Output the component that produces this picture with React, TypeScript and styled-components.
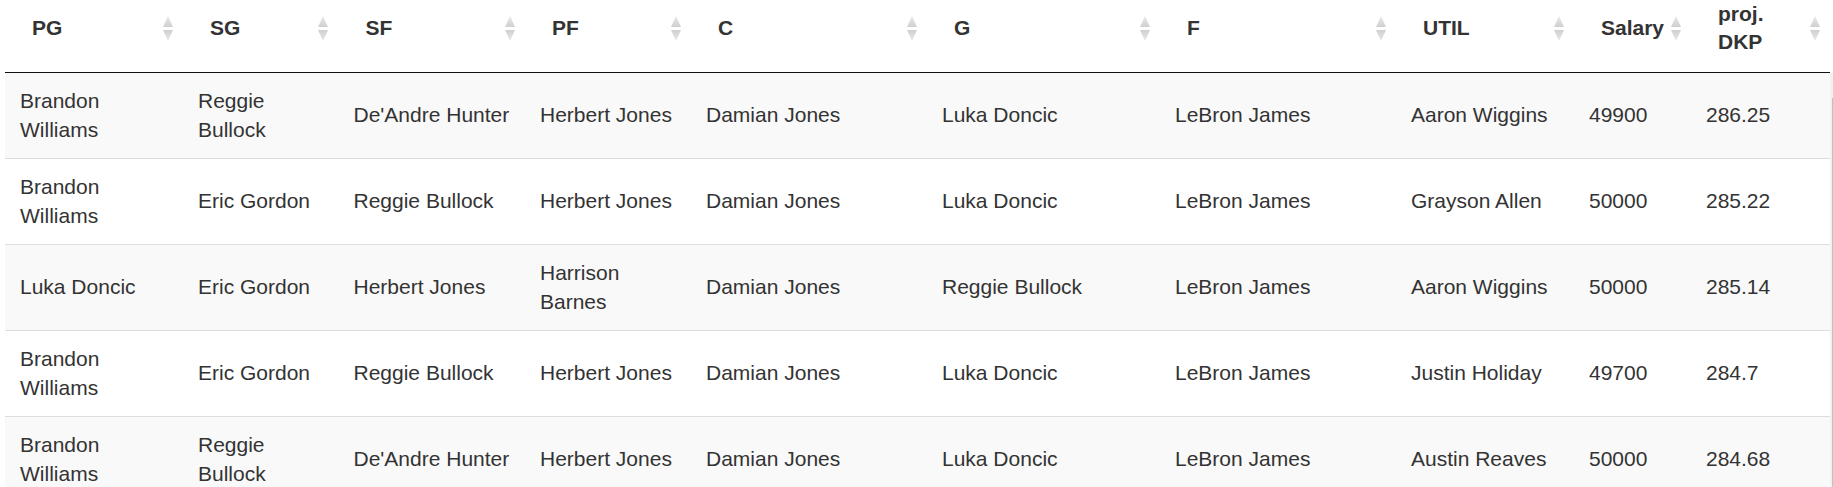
import React from 'react';
import styled, {createGlobalStyle} from "styled-components";

const GlobalStyle = createGlobalStyle`
  body {
    margin: 0;
    background: #fff;
    font-family: "Liberation Sans", Arial, sans-serif;
    overflow: hidden;
  }
`

type Column = { key: string; label: string; width: number }

const columns: Column[] = [
    {key: 'pg', label: 'PG', width: 178},
    {key: 'sg', label: 'SG', width: 155.5},
    {key: 'sf', label: 'SF', width: 186.5},
    {key: 'pf', label: 'PF', width: 166},
    {key: 'c', label: 'C', width: 236},
    {key: 'g', label: 'G', width: 233},
    {key: 'f', label: 'F', width: 236},
    {key: 'util', label: 'UTIL', width: 178},
    {key: 'salary', label: 'Salary', width: 117},
    {key: 'dkp', label: 'proj. DKP', width: 139},
]

const lineups: string[][] = [
    ['Brandon Williams', 'Reggie Bullock', "De'Andre Hunter", 'Herbert Jones', 'Damian Jones', 'Luka Doncic', 'LeBron James', 'Aaron Wiggins', '49900', '286.25'],
    ['Brandon Williams', 'Eric Gordon', 'Reggie Bullock', 'Herbert Jones', 'Damian Jones', 'Luka Doncic', 'LeBron James', 'Grayson Allen', '50000', '285.22'],
    ['Luka Doncic', 'Eric Gordon', 'Herbert Jones', 'Harrison Barnes', 'Damian Jones', 'Reggie Bullock', 'LeBron James', 'Aaron Wiggins', '50000', '285.14'],
    ['Brandon Williams', 'Eric Gordon', 'Reggie Bullock', 'Herbert Jones', 'Damian Jones', 'Luka Doncic', 'LeBron James', 'Justin Holiday', '49700', '284.7'],
    ['Brandon Williams', 'Reggie Bullock', "De'Andre Hunter", 'Herbert Jones', 'Damian Jones', 'Luka Doncic', 'LeBron James', 'Austin Reaves', '50000', '284.68'],
]

const SortIcon = () => (
    <svg width="10" height="25" viewBox="0 0 10 25">
        <defs>
            <linearGradient id="sortShade" x1="0" y1="0" x2="0" y2="25" gradientUnits="userSpaceOnUse">
                <stop offset="0" stopColor="#e9e9e9"/>
                <stop offset="0.45" stopColor="#cfcfcf"/>
                <stop offset="0.55" stopColor="#cfcfcf"/>
                <stop offset="1" stopColor="#e9e9e9"/>
            </linearGradient>
        </defs>
        <polygon points="5,0 10,11 0,11" fill="url(#sortShade)"/>
        <polygon points="0,14 10,14 5,25" fill="url(#sortShade)"/>
    </svg>
)

const ColGroup = () => (
    <colgroup>
        {columns.map(c => <col key={c.key} style={{width: c.width}}/>)}
    </colgroup>
)

const App = () => {
    return (
        <>
            <GlobalStyle/>
            <TableWrapper>
                <ScrollHead>
                    <Table>
                        <ColGroup/>
                        <thead>
                        <tr>
                            {columns.map(c => (
                                <HeadCell key={c.key}>
                                    <HeadInner>
                                        <HeadLabel>{c.label}</HeadLabel>
                                        <SortIcon/>
                                    </HeadInner>
                                </HeadCell>
                            ))}
                        </tr>
                        </thead>
                    </Table>
                </ScrollHead>
                <ScrollBody>
                    <BodyTableArea>
                        <Table>
                            <ColGroup/>
                            <tbody>
                            {lineups.map((row, i) => (
                                <Row key={i} $striped={i % 2 === 0}>
                                    {row.map((cell, j) => <Cell key={j}>{cell}</Cell>)}
                                </Row>
                            ))}
                            </tbody>
                        </Table>
                    </BodyTableArea>
                    <ScrollTrack>
                        <ScrollThumb/>
                    </ScrollTrack>
                </ScrollBody>
            </TableWrapper>
        </>
    );
};

const TableWrapper = styled.div`
  padding-left: 5px;
  width: 1828px;
  color: #333;
`

const ScrollHead = styled.div`
  width: 1825px;
`

const Table = styled.table`
  width: 1825px;
  table-layout: fixed;
  border-collapse: collapse;
  border-spacing: 0;
`

const HeadCell = styled.th`
  padding: 0 10.5px 16px 27px;
  border-bottom: 1px solid #111;
  text-align: left;
  vertical-align: middle;
  font-size: 21px;
  line-height: 28px;
  font-weight: bold;
  color: #333;
`

const HeadInner = styled.div`
  display: flex;
  align-items: center;
  gap: 20px;
`

const HeadLabel = styled.span`
  flex: 1;
  min-width: 0;
  white-space: normal;
`

const ScrollBody = styled.div`
  display: flex;
  height: 414px;
  overflow: hidden;
`

const BodyTableArea = styled.div`
  width: 1825px;
`

const Row = styled.tr<{ $striped: boolean }>`
  background: ${p => p.$striped ? '#f9f9f9' : '#fff'};

  &:first-child td {
    border-top: 0;
  }
`

const Cell = styled.td`
  padding: 14px 15px;
  border-top: 1px solid #ddd;
  vertical-align: middle;
  font-size: 21px;
  line-height: 28.5px;
  color: #333;
`

const ScrollTrack = styled.div`
  width: 3px;
  padding-top: 25px;
  background: #f1f1f1;
  display: flex;
  flex-direction: column;
`

const ScrollThumb = styled.div`
  flex: 1;
  background: linear-gradient(to right, #f1f1f1 0 2px, #c1c1c1 2px);
`

export default App;
